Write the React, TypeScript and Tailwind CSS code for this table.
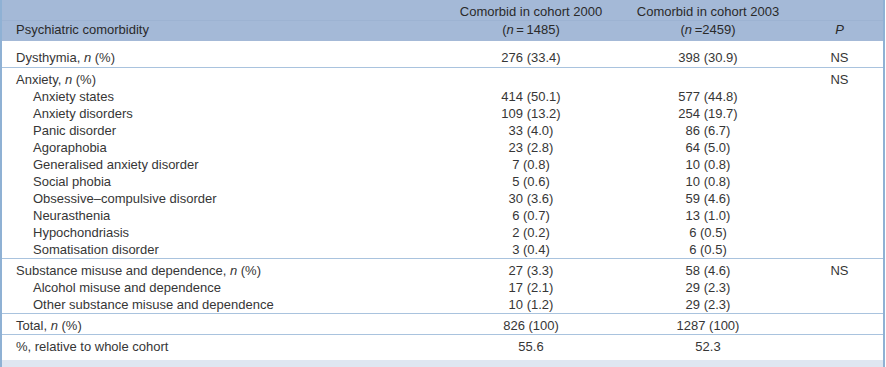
type Row = { label: React.ReactNode; a: string; b: string; p?: string; sub?: boolean };

const groups: Row[][] = [
  [{ label: <>Dysthymia, <i>n</i> (%)</>, a: '276 (33.4)', b: '398 (30.9)', p: 'NS' }],
  [
    { label: <>Anxiety, <i>n</i> (%)</>, a: '', b: '', p: 'NS' },
    { label: 'Anxiety states', a: '414 (50.1)', b: '577 (44.8)', sub: true },
    { label: 'Anxiety disorders', a: '109 (13.2)', b: '254 (19.7)', sub: true },
    { label: 'Panic disorder', a: '33 (4.0)', b: '86 (6.7)', sub: true },
    { label: 'Agoraphobia', a: '23 (2.8)', b: '64 (5.0)', sub: true },
    { label: 'Generalised anxiety disorder', a: '7 (0.8)', b: '10 (0.8)', sub: true },
    { label: 'Social phobia', a: '5 (0.6)', b: '10 (0.8)', sub: true },
    { label: 'Obsessive–compulsive disorder', a: '30 (3.6)', b: '59 (4.6)', sub: true },
    { label: 'Neurasthenia', a: '6 (0.7)', b: '13 (1.0)', sub: true },
    { label: 'Hypochondriasis', a: '2 (0.2)', b: '6 (0.5)', sub: true },
    { label: 'Somatisation disorder', a: '3 (0.4)', b: '6 (0.5)', sub: true },
  ],
  [
    { label: <>Substance misuse and dependence, <i>n</i> (%)</>, a: '27 (3.3)', b: '58 (4.6)', p: 'NS' },
    { label: 'Alcohol misuse and dependence', a: '17 (2.1)', b: '29 (2.3)', sub: true },
    { label: 'Other substance misuse and dependence', a: '10 (1.2)', b: '29 (2.3)', sub: true },
  ],
  [{ label: <>Total, <i>n</i> (%)</>, a: '826 (100)', b: '1287 (100)' }],
  [{ label: '%, relative to whole cohort', a: '55.6', b: '52.3' }],
];

const grid = 'grid grid-cols-[440px_178px_176px_1fr]';

export default function App() {
  return (
    <div className="w-[886px] h-[367px] bg-white overflow-hidden font-['Liberation_Sans',sans-serif] text-[13px] text-[#363636]">
      <div className="w-[885px] h-full border-x-2 border-[#8fb1d4] flex flex-col">
        <div className="bg-[#a4b9d7] pt-[3px] pb-[3px] leading-[17px] text-[#2a2a2a]">
          <div className={`${grid} border-b border-[#9db3d2]`}>
            <div />
            <div className="text-center">Comorbid in cohort 2000</div>
            <div className="text-center">Comorbid in cohort 2003</div>
            <div />
          </div>
          <div className={grid}>
            <div className="pl-[14px]">Psychiatric comorbidity</div>
            <div className="text-center">
              (<i>n</i>&thinsp;=&thinsp;1485)
            </div>
            <div className="text-center">
              (<i>n</i>&thinsp;=2459)
            </div>
            <div className="text-center">
              <i>P</i>
            </div>
          </div>
        </div>

        {groups.map((g, gi) => (
          <div
            key={gi}
            className={
              gi === 0
                ? 'pt-[8px] pb-[1px] leading-[17px]'
                : gi === groups.length - 1
                  ? 'border-t border-[#a9c3de] pt-[3px] pb-[5px] leading-[17px]'
                  : 'border-t border-[#a9c3de] pt-[3px] pb-0 leading-[17px]'
            }
          >
            {g.map((r, ri) => (
              <div key={ri} className={grid}>
                <div className={r.sub ? 'pl-[31px]' : 'pl-[14px]'}>{r.label}</div>
                <div className="text-center">{r.a}</div>
                <div className="text-center">{r.b}</div>
                <div className="text-center">{r.p}</div>
              </div>
            ))}
          </div>
        ))}

        <div className="flex-1 bg-[#dfe6f1]" />
      </div>
    </div>
  );
}
